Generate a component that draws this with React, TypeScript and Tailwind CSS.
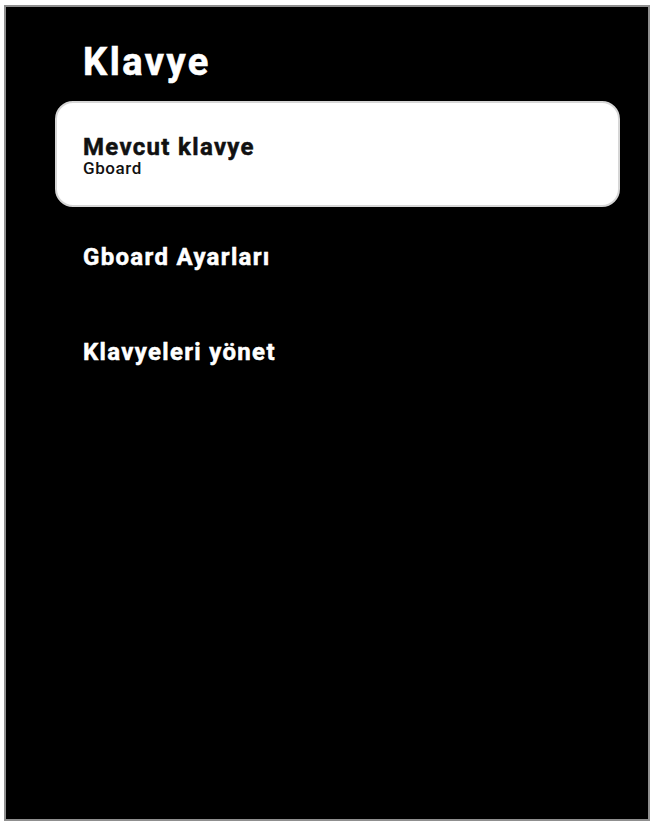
const items = ["Gboard Ayarları", "Klavyeleri yönet"];

export default function App() {
  return (
    <div className="h-[821px] w-[650px] bg-white pl-[4px] pt-[5px] font-['Roboto',sans-serif]">
      <div className="h-[816px] w-[646px] border-2 border-[#8f8f8f] bg-black">
        <h1 className="ml-[77px] mt-[36px] text-[38px] font-bold leading-none tracking-[0.065em] text-white [-webkit-text-stroke:0.6px_currentColor]">
          Klavye
        </h1>
        <div className="ml-[49px] mt-[20px] w-[565px] rounded-[18px] border-2 border-[#d6d6d6] bg-white pb-[28px] pl-[26px] pt-[32px]">
          <div className="text-[24px] font-bold leading-none tracking-[0.055em] text-[#111] [-webkit-text-stroke:0.5px_currentColor]">
            Mevcut klavye
          </div>
          <div className="mt-[1px] text-[17px] font-medium leading-none tracking-[0.035em] text-[#111]">
            Gboard
          </div>
        </div>
        <ul className="ml-[77px] mt-[38px] flex flex-col gap-[71px]">
          {items.map((t) => (
            <li
              key={t}
              className="text-[24px] font-bold leading-none tracking-[0.055em] text-white [-webkit-text-stroke:0.5px_currentColor]"
            >
              {t}
            </li>
          ))}
        </ul>
      </div>
    </div>
  );
}
